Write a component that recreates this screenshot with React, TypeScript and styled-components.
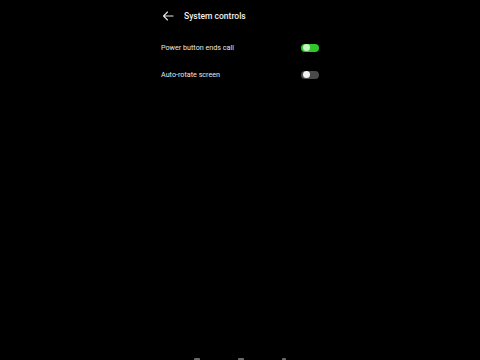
import * as React from 'react';
import styled, { createGlobalStyle } from 'styled-components';

const GlobalStyle = createGlobalStyle`
  html, body {
    margin: 0;
    padding: 0;
    background: #000;
  }
  body {
    font-family: Roboto, "Noto Sans", sans-serif;
    -webkit-font-smoothing: antialiased;
  }
`;

interface SettingItem {
  label: string;
  on: boolean;
}

const items: SettingItem[] = [
  { label: 'Power button ends call', on: true },
  { label: 'Auto-rotate screen', on: false },
];

function BackArrow() {
  return (
    <svg width="12" height="10" viewBox="0 0 12 10" fill="none">
      <path
        d="M11 5H1.5M5.5 1L1.5 5L5.5 9"
        stroke="#e6e6e6"
        strokeWidth="1.1"
        strokeLinecap="round"
        strokeLinejoin="round"
      />
    </svg>
  );
}

export default function App() {
  return (
    <Screen>
      <GlobalStyle />
      <Column>
        <Header>
          <BackArrow />
          <Title>System controls</Title>
        </Header>
        <List>
          {items.map((item) => (
            <Row key={item.label}>
              <Label>{item.label}</Label>
              <Toggle $on={item.on}>
                <Knob $on={item.on} />
              </Toggle>
            </Row>
          ))}
        </List>
      </Column>
      <NavBar>
        <NavDot />
        <NavDot />
        <NavDot $small />
      </NavBar>
    </Screen>
  );
}

const Screen = styled.div`
  width: 480px;
  height: 360px;
  background: #000;
  display: flex;
  flex-direction: column;
  align-items: center;
  overflow: hidden;
`;

const Column = styled.div`
  width: 158px;
  flex: 1;
  display: flex;
  flex-direction: column;
`;

const Header = styled.header`
  display: flex;
  align-items: center;
  gap: 10px;
  height: 20px;
  margin-top: 6px;
  padding-left: 1px;
`;

const Title = styled.h1`
  margin: 0;
  font-size: 8.5px;
  font-weight: 500;
  color: #f0f0f0;
`;

const List = styled.div`
  display: flex;
  flex-direction: column;
  margin-top: 8px;
`;

const Row = styled.div`
  display: flex;
  align-items: center;
  justify-content: space-between;
  height: 27px;
`;

const Label = styled.span`
  font-size: 7.2px;
  color: #e8e8e8;
`;

const Toggle = styled.div<{ $on: boolean }>`
  width: 18px;
  height: 8px;
  border-radius: 4px;
  background: ${(p) => (p.$on ? '#2fc72a' : '#4a4a4a')};
  display: flex;
  align-items: center;
  padding: 0 1px;
  box-sizing: border-box;
`;

const Knob = styled.div<{ $on: boolean }>`
  width: 7px;
  height: 7px;
  border-radius: 50%;
  margin-left: 1px;
  background: ${(p) => (p.$on ? '#c9f5c4' : '#f2f2f2')};
`;

const NavBar = styled.div`
  display: flex;
  justify-content: center;
  gap: 38px;
  height: 4px;
  align-items: flex-end;
`;

const NavDot = styled.div<{ $small?: boolean }>`
  width: ${(p) => (p.$small ? '4px' : '6px')};
  height: 2px;
  border-radius: 1px 1px 0 0;
  background: #6a6a6a;
`;
